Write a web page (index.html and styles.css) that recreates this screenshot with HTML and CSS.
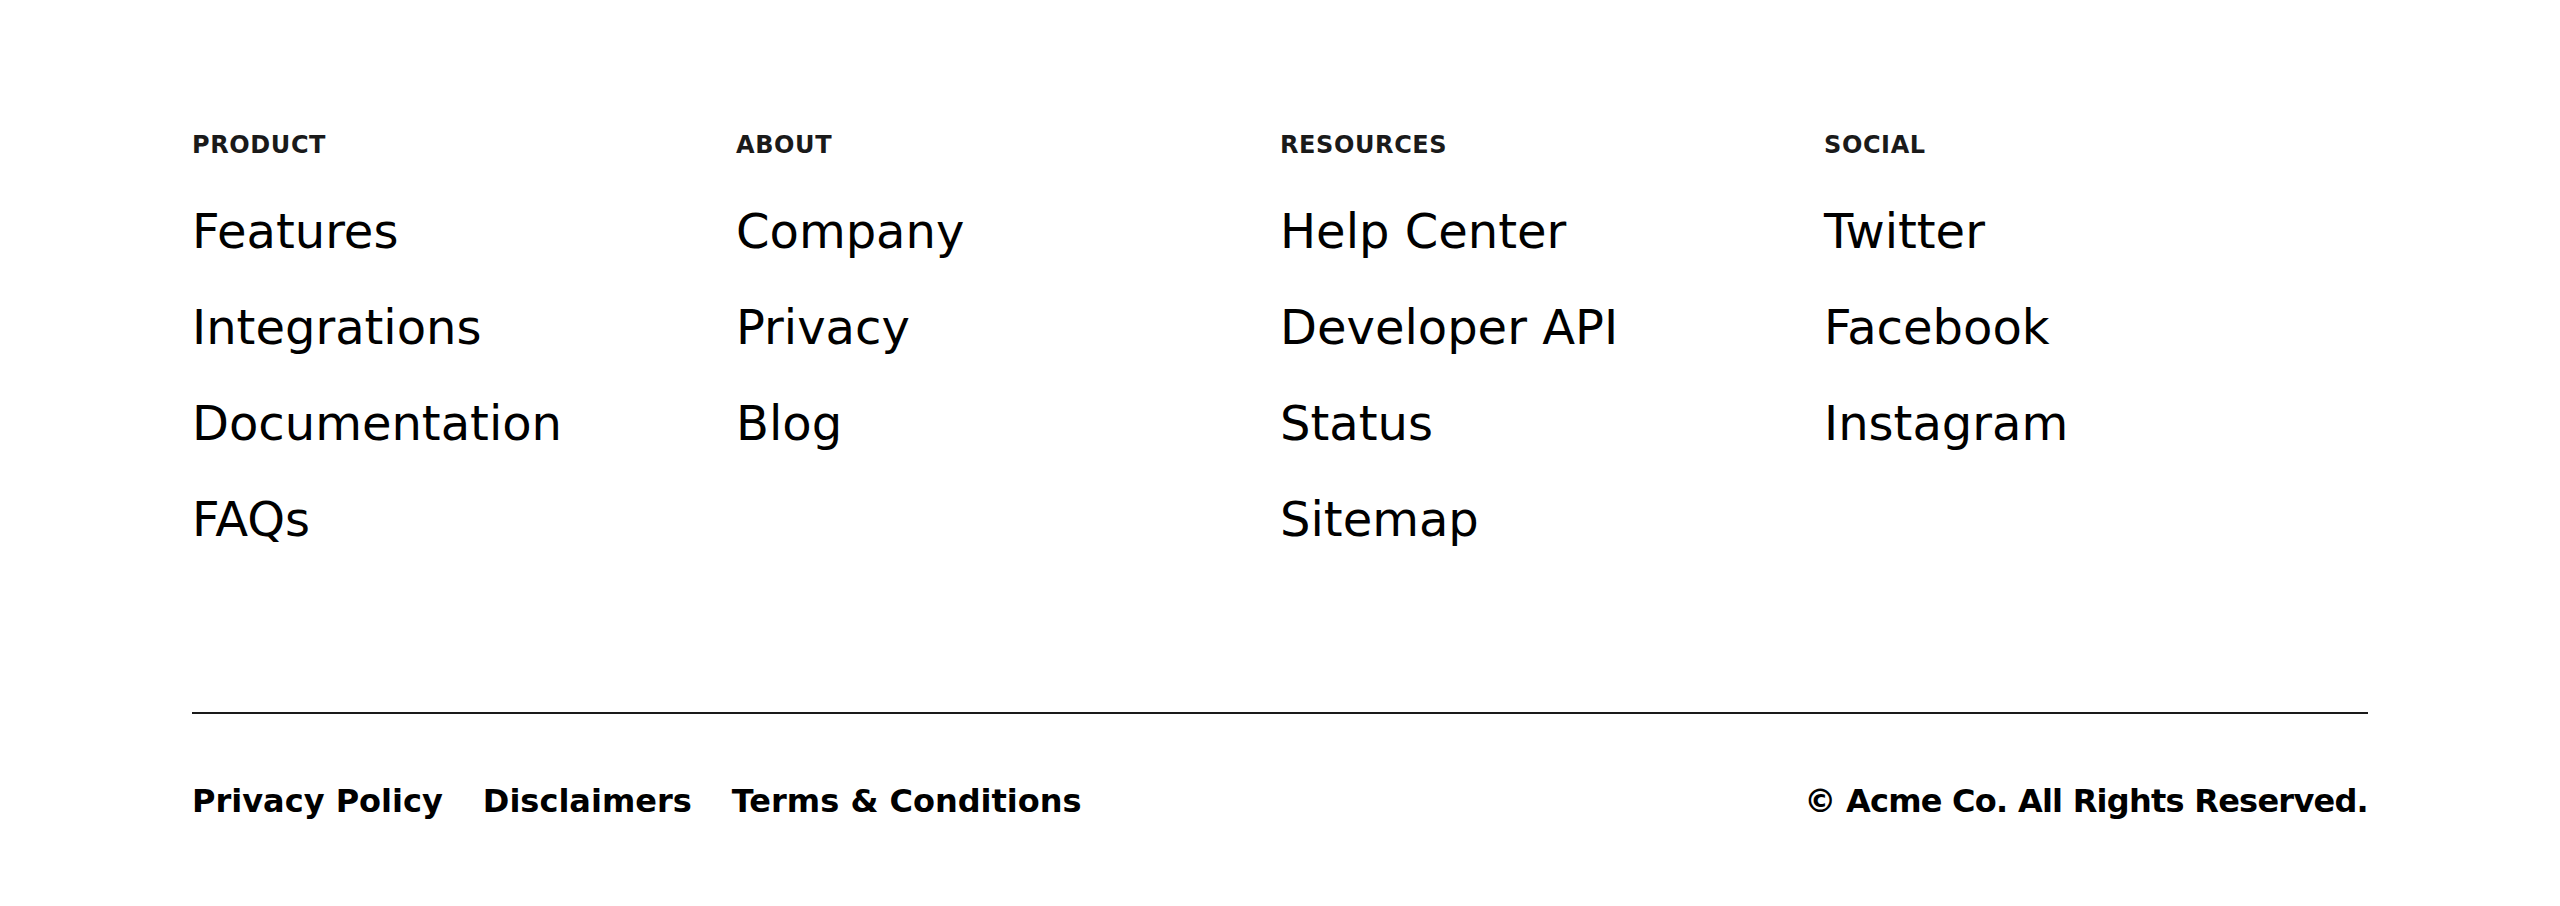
FILE: index.html
```html
<!DOCTYPE html>
<html lang="en">
<head>
    <meta charset="UTF-8">
    <meta name="viewport" content="width=device-width, initial-scale=1.0">
    <title>Acme Co. Footer</title>
    <link rel="stylesheet" href="styles.css">
</head>
<body>
    <footer class="footer">
        <!-- link columns -->
        <div class="footer-columns">
            <div class="footer-col">
                <h4 class="col-title">PRODUCT</h4>
                <ul class="col-links">
                    <li><a href="#">Features</a></li>
                    <li><a href="#">Integrations</a></li>
                    <li><a href="#">Documentation</a></li>
                    <li><a href="#">FAQs</a></li>
                </ul>
            </div>
            <div class="footer-col">
                <h4 class="col-title">ABOUT</h4>
                <ul class="col-links">
                    <li><a href="#">Company</a></li>
                    <li><a href="#">Privacy</a></li>
                    <li><a href="#">Blog</a></li>
                </ul>
            </div>
            <div class="footer-col">
                <h4 class="col-title">RESOURCES</h4>
                <ul class="col-links">
                    <li><a href="#">Help Center</a></li>
                    <li><a href="#">Developer API</a></li>
                    <li><a href="#">Status</a></li>
                    <li><a href="#">Sitemap</a></li>
                </ul>
            </div>
            <div class="footer-col">
                <h4 class="col-title">SOCIAL</h4>
                <ul class="col-links">
                    <li><a href="#">Twitter</a></li>
                    <li><a href="#">Facebook</a></li>
                    <li><a href="#">Instagram</a></li>
                </ul>
            </div>
        </div>

        <!-- bottom bar -->
        <div class="footer-bottom">
            <nav class="legal-links">
                <a href="#">Privacy Policy</a>
                <a href="#">Disclaimers</a>
                <a href="#">Terms &amp; Conditions</a>
            </nav>
            <p class="copyright">&copy; Acme Co. All Rights Reserved.</p>
        </div>
    </footer>
</body>
</html>
```

FILE: styles.css
```css
body {
    margin: 0;
    padding: 0;
    background-color: #fff;
    color: #000;
    font-family: 'DejaVu Sans', 'Liberation Sans', sans-serif;
}
a {
    color: #000;
    text-decoration: none;
}
.footer {
    padding: 127px 192px 80px;
}
.footer-columns {
    display: grid;
    grid-template-columns: repeat(4, 1fr);
    padding-bottom: 157px;
    border-bottom: 2px solid #1a1a1a;
}
.col-title {
    margin: 0 0 32px;
    font-size: 24px;
    line-height: 36px;
    font-weight: bold;
    letter-spacing: 0.025em;
    color: #1a1a1a;
}
.col-links {
    list-style: none;
    margin: 0;
    padding: 0;
    display: flex;
    flex-direction: column;
    gap: 24px;
}
.col-links a {
    font-size: 48px;
    line-height: 72px;
}
.footer-bottom {
    display: flex;
    justify-content: space-between;
    align-items: center;
    margin-top: 63px;
    font-size: 32px;
    line-height: 48px;
    font-weight: bold;
}
.legal-links {
    display: flex;
    gap: 40px;
}
.copyright {
    margin: 0;
    letter-spacing: -0.75px;
}
```
